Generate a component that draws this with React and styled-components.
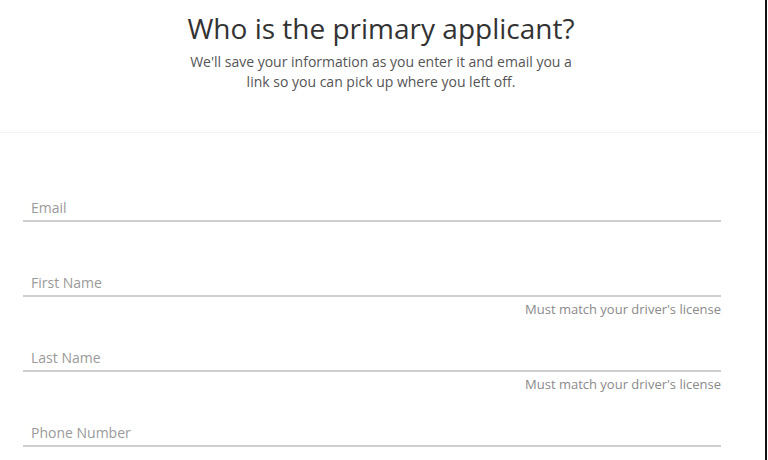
import React from "react";
import styled, { createGlobalStyle } from "styled-components";

const Global = createGlobalStyle`
  html, body {
    margin: 0;
    padding: 0;
    background: #fff;
    font-family: "Open Sans", "Liberation Sans", sans-serif;
  }
`;

const Page = styled.div`
  width: 767px;
  height: 460px;
  box-sizing: border-box;
  border-right: 2px solid #111;
  overflow: hidden;
`;

const Header = styled.header`
  height: 133px;
  margin-right: 3px;
  box-sizing: border-box;
  border-bottom: 1px solid #f2f2f2;
  padding-top: 10px;
  text-align: center;
`;

const Title = styled.h1`
  margin: 0;
  font-size: 28px;
  line-height: 36px;
  font-weight: 400;
  color: #333;
`;

const Subtitle = styled.p`
  margin: 6px auto 0;
  width: 400px;
  font-size: 14px;
  line-height: 20px;
  color: #555;
`;

const Form = styled.form`
  padding: 51px 44px 0 23px;
`;

const Field = styled.div`
  height: 75px;
`;

const InputBox = styled.div`
  height: 38px;
  box-sizing: border-box;
  padding: 14px 8px 0;
  border-bottom: 2px solid #cfcfcf;
  font-size: 14px;
  line-height: 20px;
  color: #9a9a9a;
`;

const Helper = styled.div`
  margin-top: 3px;
  text-align: right;
  font-size: 13px;
  line-height: 18px;
  color: #8a8a8a;
`;

const fields = [
  { label: "Email" },
  { label: "First Name", helper: "Must match your driver's license" },
  { label: "Last Name", helper: "Must match your driver's license" },
  { label: "Phone Number" },
];

export default function App() {
  return (
    <Page>
      <Global />
      <Header>
        <Title>Who is the primary applicant?</Title>
        <Subtitle>
          We'll save your information as you enter it and email you a link so
          you can pick up where you left off.
        </Subtitle>
      </Header>
      <Form>
        {fields.map((f) => (
          <Field key={f.label}>
            <InputBox>{f.label}</InputBox>
            {f.helper && <Helper>{f.helper}</Helper>}
          </Field>
        ))}
      </Form>
    </Page>
  );
}
